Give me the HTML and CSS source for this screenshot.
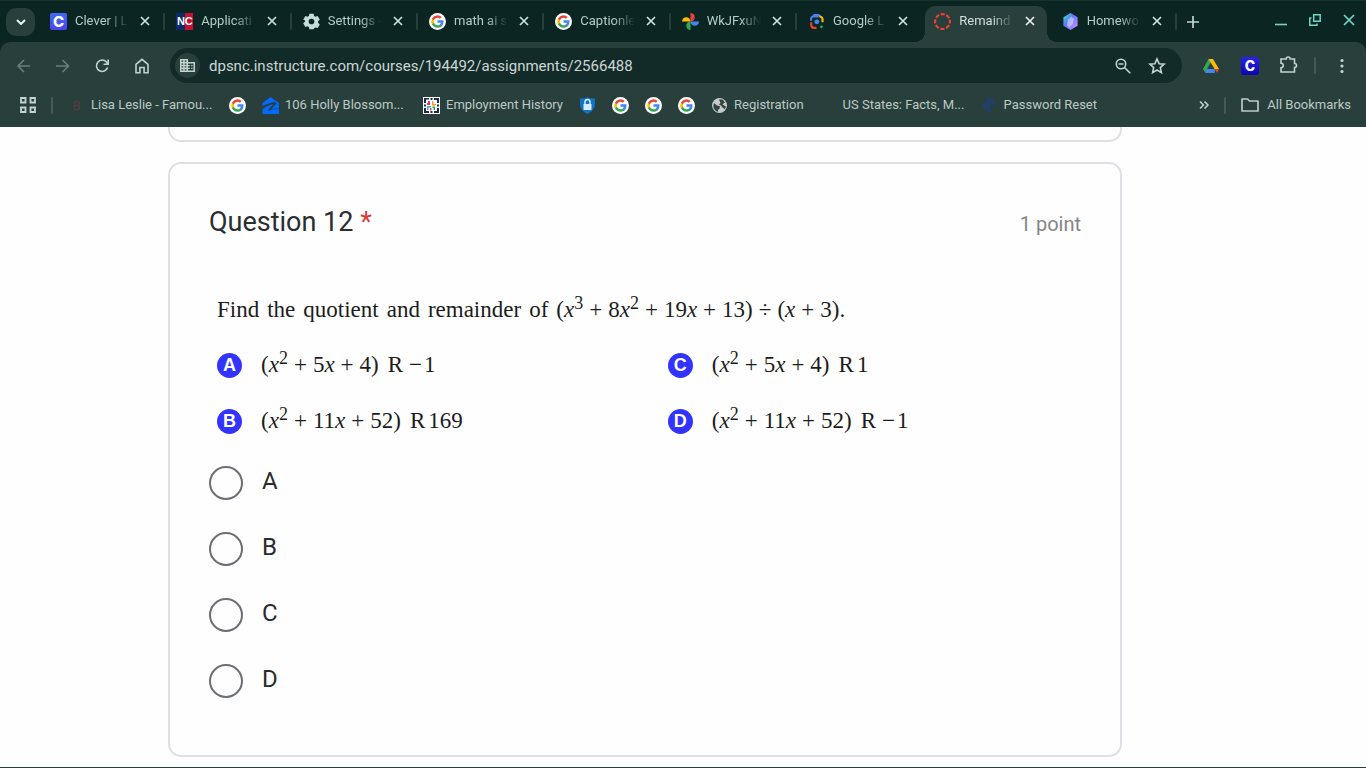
FILE: index.html
```html
<!DOCTYPE html>
<html lang="en">
<head>
<meta charset="utf-8">
<meta name="viewport" content="width=device-width, initial-scale=1">
<title>Remainder</title>
<link rel="stylesheet" href="styles.css">
</head>
<body>
<svg class="defs" aria-hidden="true">
  <symbol id="google" viewBox="0 0 24 24">
    <circle cx="12" cy="12" r="12" fill="#fff"/>
    <g transform="translate(2.400 2.400) scale(.8)">
      <path fill="#4285f4" d="M22.56 12.25c0-.78-.07-1.53-.2-2.25H12v4.26h5.92a5.06 5.06 0 0 1-2.2 3.32v2.77h3.57c2.08-1.92 3.27-4.74 3.27-8.1z"/>
      <path fill="#34a853" d="M12 23c2.97 0 5.46-.98 7.28-2.66l-3.57-2.77c-.98.66-2.23 1.06-3.71 1.06-2.86 0-5.29-1.93-6.16-4.53H2.18v2.84A11 11 0 0 0 12 23z"/>
      <path fill="#fbbc05" d="M5.84 14.09a6.6 6.6 0 0 1 0-4.18V7.07H2.18a11 11 0 0 0 0 9.86z"/>
      <path fill="#ea4335" d="M12 5.38c1.62 0 3.06.56 4.21 1.64l3.15-3.15A11 11 0 0 0 2.18 7.07l3.66 2.84C6.71 7.31 9.14 5.38 12 5.38z"/>
    </g>
  </symbol>
  <symbol id="close" viewBox="0 0 10 10"><path d="M1 1l8 8M9 1L1 9" fill="none" stroke="currentColor" stroke-width="1.7"/></symbol>
</svg>

<header class="browser">
  <div class="tabstrip">
    <button class="tab-search" type="button" aria-label="Search tabs"><svg width="10" height="6" viewBox="0 0 10 6"><path d="M1 1l4 4 4-4" fill="none" stroke="currentColor" stroke-width="2"/></svg></button>
    <nav class="tabs" aria-label="Open tabs">
      <div class="tab"><span class="favicon clever">C</span><span class="tab-title">Clever | L</span><button class="tab-close" type="button" aria-label="Close tab"><svg><use href="#close"/></svg></button></div>
      <div class="tab"><span class="favicon nc">NC</span><span class="tab-title">Applicati</span><button class="tab-close" type="button" aria-label="Close tab"><svg><use href="#close"/></svg></button></div>
      <div class="tab"><svg class="favicon gear" viewBox="0 0 24 24"><path fill="currentColor" fill-rule="evenodd" d="M9 1h6l.7 3.2 1.9 1.1 3.1-1 3 5.2-2.4 2.2v2.2l2.4 2.2-3 5.2-3.1-1-1.9 1.1L15 23H9l-.7-3.2-1.9-1.1-3.1 1-3-5.2 2.4-2.2v-2.2L.3 9.500l3-5.200 3.100 1 1.900-1.100zM12 8a4 4 0 1 0 0 8 4 4 0 0 0 0-8z"/></svg><span class="tab-title">Settings -</span><button class="tab-close" type="button" aria-label="Close tab"><svg><use href="#close"/></svg></button></div>
      <div class="tab"><svg class="favicon"><use href="#google"/></svg><span class="tab-title">math ai s</span><button class="tab-close" type="button" aria-label="Close tab"><svg><use href="#close"/></svg></button></div>
      <div class="tab"><svg class="favicon"><use href="#google"/></svg><span class="tab-title">Captionle</span><button class="tab-close" type="button" aria-label="Close tab"><svg><use href="#close"/></svg></button></div>
      <div class="tab"><svg class="favicon" viewBox="0 0 24 24"><path fill="#ea4335" d="M12 0a6 6 0 0 1 0 12z"/><path fill="#4285f4" d="M24 12a6 6 0 0 1-12 0z"/><path fill="#34a853" d="M12 24a6 6 0 0 1 0-12z"/><path fill="#fbbc04" d="M0 12a6 6 0 0 1 12 0z"/></svg><span class="tab-title">WkJFxuN</span><button class="tab-close" type="button" aria-label="Close tab"><svg><use href="#close"/></svg></button></div>
      <div class="tab"><svg class="favicon" viewBox="0 0 24 24" fill="none" stroke-width="3"><path stroke="#4285f4" d="M4.500 11V8a3 3 0 0 1 3-3H15"/><path stroke="#4285f4" d="M7 4l2-1h6l2 2"/><path stroke="#fbbc04" d="M16 5a4 4 0 0 1 4.500 4v4"/><path stroke="#ea4335" d="M4.500 13v4a4 4 0 0 0 4 4H12"/><circle cx="12.500" cy="12.500" r="3.500" fill="#4285f4"/><circle cx="19" cy="19.500" r="2" fill="#34a853"/></svg><span class="tab-title">Google L</span><button class="tab-close" type="button" aria-label="Close tab"><svg><use href="#close"/></svg></button></div>
      <div class="tab active"><svg class="favicon" viewBox="0 0 24 24"><circle cx="12" cy="12" r="10.500" fill="none" stroke="#ee4035" stroke-width="3" stroke-dasharray="5.900 2.347" stroke-dashoffset="2.950"/></svg><span class="tab-title">Remaind</span><button class="tab-close" type="button" aria-label="Close tab"><svg><use href="#close"/></svg></button></div>
      <div class="tab"><svg class="favicon" viewBox="0 0 24 24"><defs><linearGradient id="gem" x1="0" y1="0" x2="1" y2="1"><stop offset="0" stop-color="#2df0c0"/><stop offset=".4" stop-color="#5b7bff"/><stop offset="1" stop-color="#d98bff"/></linearGradient></defs><path fill="url(#gem)" d="M12 0l10 6v12l-10 6-10-6V6z"/><path fill="#fff" opacity=".45" d="M13 5l4 3-2 8-5 4-3-3 1-7z"/></svg><span class="tab-title">Homewo</span><button class="tab-close" type="button" aria-label="Close tab"><svg><use href="#close"/></svg></button></div>
    </nav>
    <button class="new-tab" type="button" aria-label="New tab"><svg width="12" height="12" viewBox="0 0 12 12"><path d="M6 0v12M0 6h12" stroke="currentColor" stroke-width="1.700"/></svg></button>
    <div class="window-controls">
      <button type="button" aria-label="Minimize"><svg width="12" height="12" viewBox="0 0 12 12"><path d="M0 10.500h12" stroke="currentColor" stroke-width="1.600"/></svg></button>
      <button type="button" aria-label="Restore"><svg width="12" height="12" viewBox="0 0 12 12" fill="none" stroke="currentColor" stroke-width="1.500"><path d="M4.700.8h6.500v6.500H4.700zM2.500 4H.8v7.200H8V9.500"/></svg></button>
      <button type="button" aria-label="Close window"><svg width="12" height="12" viewBox="0 0 12 12"><path d="M1 1l10 10M11 1L1 11" stroke="currentColor" stroke-width="1.700"/></svg></button>
    </div>
  </div>

  <div class="chrome-body">
    <div class="toolbar">
      <button class="tool dim" type="button" aria-label="Back"><svg viewBox="0 0 20 20"><path d="M16 10H4.500M10 4l-6 6 6 6"/></svg></button>
      <button class="tool dim" type="button" aria-label="Forward"><svg viewBox="0 0 20 20"><path d="M3 10h12.500M9.500 4l6 6-6 6"/></svg></button>
      <button class="tool" type="button" aria-label="Reload"><svg viewBox="0 0 20 20"><path d="M15.600 11.500A5.700 5.700 0 1 1 14.500 6l1.500 1.700M16.200 3.500v4.700h-4.700"/></svg></button>
      <button class="tool" type="button" aria-label="Home"><svg viewBox="0 0 20 20"><path d="M5 16.700V8.300l6-5 6 5v8.400h-3.900v-5.200H8.900v5.200z"/></svg></button>
      <div class="omnibox">
        <button class="site-info" type="button" aria-label="View site information"><svg width="15" height="13" viewBox="0 0 15 13"><path fill="currentColor" fill-rule="evenodd" d="M0 0h8v3h7v10H0zM1.500 1.500v1.200h1.700V1.500zm3.200 0v1.200h1.700V1.500zM1.500 4.400v1.300h1.700V4.400zm3.200 0v1.300h1.700V4.400zM1.500 7.300v1.300h1.700V7.300zm3.200 0v1.300h1.700V7.300zM1.500 10.200v1.300h1.700v-1.300zm3.200 0v1.300h1.700v-1.300zM8 4.500V6h1.800v1.300H8v1.400h1.800V10H8v1.500h5.500v-7zm3.200 1.500h1.300v1.300h-1.300zm0 2.700h1.300V10h-1.300z"/></svg></button>
        <input class="url" type="text" aria-label="Address bar" value="dpsnc.instructure.com/courses/194492/assignments/2566488">
        <button class="tool" type="button" aria-label="Zoom"><svg viewBox="0 0 20 20"><circle cx="8" cy="8" r="4.700"/><path d="M11.500 11.500l5.800 5.800M5.600 8h4.800"/></svg></button>
        <button class="tool" type="button" aria-label="Bookmark this page"><svg viewBox="0 0 20 20"><path d="M10 3l2.100 4.700 5 .5-3.800 3.400 1.100 5-4.400-2.600-4.400 2.600 1.100-5-3.800-3.400 5-.5z"/></svg></button>
      </div>
      <button class="tool" type="button" aria-label="Google Drive"><svg class="filled" viewBox="0 0 20 20"><path fill="#34a853" d="M7.500 3h4.200L6.300 12.500l-2.200 4L2 13z"/><path fill="#fbbc04" d="M7.500 3H12l6 10h-4.300z"/><path fill="#4285f4" d="M5.500 13H14l-.2 4H4.100z"/><path fill="#ea4335" d="M13.700 13H18l-2.100 3.800z"/></svg></button>
      <button class="tool clever-ext" type="button" aria-label="Clever">C</button>
      <button class="tool" type="button" aria-label="Extensions"><svg viewBox="0 0 20 20"><path d="M2 4h5.200a2 2 0 0 1 4 0h4.300v4.500a2 2 0 0 1 0 4V17H2v-4.200a2.200 2.200 0 0 0 0-4.500z" transform="translate(0 -1)"/></svg></button>
      <span class="divider"></span>
      <button class="tool" type="button" aria-label="Menu"><svg class="filled" viewBox="0 0 20 20" fill="currentColor"><circle cx="10" cy="4.500" r="1.600"/><circle cx="10" cy="10" r="1.600"/><circle cx="10" cy="15.500" r="1.600"/></svg></button>
    </div>

    <nav class="bookmarks" aria-label="Bookmarks">
      <button class="apps" type="button" aria-label="Apps"><svg width="16" height="16" viewBox="0 0 16 16" fill="none" stroke="currentColor" stroke-width="1.800"><path d="M1 1h4.500v4.500H1zM10.500 1H15v4.500h-4.500zM1 10.500h4.500V15H1zM10.500 10.500H15V15h-4.500z"/></svg></button>
      <span class="divider"></span>
      <a class="bookmark" href="#"><span class="bm-icon letter-b">B</span><span class="bm-label long">Lisa Leslie - Famou...</span></a>
      <a class="bookmark" href="#" aria-label="Google"><svg class="bm-icon"><use href="#google"/></svg></a>
      <a class="bookmark" href="#"><svg class="bm-icon" viewBox="0 0 17 17"><path fill="#006aff" d="M8.500 0L17 6v2.500L14 6 12.800 5C9 5.600 4.500 7 .5 9V6zM.5 17v-4.500C4 9.500 7 8 10.500 7.200l.5.600C9 9.500 7 11.800 5.500 14 9 12.500 13 11.800 17 12v5z"/><path fill="#006aff" d="M13 5.500l4 2.500v3.500c-3-.3-5 0-7.500.6C11.500 9.500 13 8 14.500 6.500z"/></svg><span class="bm-label long">106 Holly Blossom...</span></a>
      <a class="bookmark" href="#"><svg class="bm-icon" viewBox="0 0 17 17"><path fill="#fff" d="M0 0h17v17H0z"/><path fill="#1c2b52" d="M1 1h5v1.500H3V6H1zM11 1h5v5h-2V3h-3zM1 11h2v3h3v2H1zM14 11h2v5h-5v-2h3zM7.500 1h2v2h-2zM1 7.500h2v2H1zM14 7.500h2v2h-2zM7.500 14h2v2h-2z"/><path fill="#e5394b" d="M5 4h2v4H4V6h1z"/><path fill="#f39a2d" d="M9 4h1.500v3H13v1.500H9z"/><path fill="#35a7c8" d="M4 9h4v1.500H5.500V13H4z"/><path fill="#2f9d57" d="M9.500 9.500H12V13h-1.500v-2h-1z"/><path fill="#e5394b" d="M7 11h1.500v2.500H7z"/></svg><span class="bm-label">Employment History</span></a>
      <a class="bookmark" href="#" aria-label="Secure"><svg class="bm-icon" viewBox="0 0 17 17"><path fill="#1173c7" d="M8.500 0l2 1.200 5.500.3v6c0 4-3.500 7.500-7.500 9.500C4.500 15 1 11.500 1 7.500v-6l5.500-.3z"/><path fill="#d6ecff" d="M4.500 7h8v6h-8z"/><path fill="none" stroke="#d6ecff" stroke-width="1.500" d="M6 7V5a2.500 2.500 0 0 1 5 0v2"/></svg></a>
      <a class="bookmark" href="#" aria-label="Google"><svg class="bm-icon"><use href="#google"/></svg></a>
      <a class="bookmark" href="#" aria-label="Google"><svg class="bm-icon"><use href="#google"/></svg></a>
      <a class="bookmark" href="#" aria-label="Google"><svg class="bm-icon"><use href="#google"/></svg></a>
      <a class="bookmark" href="#"><svg class="bm-icon" viewBox="0 0 17 17"><circle cx="8.500" cy="8.500" r="7.500" fill="#c4c9cc"/><path fill="#33443f" d="M3 6l3 2.500 2.500.5.500 2-2 2v1.800C4 14 2 11 2.500 8zM8 2.500h3.500l2.500 3-1 .5-1.500 1.500 2.500 1.500 1 .5-1 2.500-2-1-2-2.500-2-1L9.500 6z"/></svg><span class="bm-label">Registration</span></a>
      <a class="bookmark" href="#"><span class="bm-icon"></span><span class="bm-label long">US States: Facts, M...</span></a>
      <a class="bookmark" href="#"><svg class="bm-icon" viewBox="0 0 17 17"><path fill="#233f63" d="M8.500 0c3 2 6 4.500 8 8l-1.500.8c-2-2-4-2-5-.8s-.7 3 .8 4.500L9 17C6 15 3 12 .5 8.500z"/></svg><span class="bm-label">Password Reset</span></a>
      <button class="overflow" type="button" aria-label="More bookmarks"><svg width="10" height="8" viewBox="0 0 10 8"><path d="M1 .5L4.500 4 1 7.500M5.500.5L9 4 5.500 7.500" fill="none" stroke="currentColor" stroke-width="1.500"/></svg></button>
      <span class="divider"></span>
      <a class="bookmark all" href="#"><svg width="18" height="14" viewBox="0 0 18 14"><path d="M1 1h5.500l2 2H17v10H1z" fill="none" stroke="currentColor" stroke-width="1.700" stroke-linejoin="round"/></svg><span class="bm-label">All Bookmarks</span></a>
    </nav>
  </div>
</header>

<main class="page">
  <div class="card card-previous"></div>
  <form class="card question">
    <div class="question-head">
      <h1 class="question-title">Question 12 <span class="required">*</span></h1>
      <span class="points">1 point</span>
    </div>
    <div class="problem">
      <p class="prompt"><span>Find</span><span>the</span><span>quotient</span><span>and</span><span>remainder</span><span>of</span><span>(<i>x</i><sup>3</sup><b class="op">+</b>8<i>x</i><sup>2</sup><b class="op">+</b>19<i>x</i><b class="op">+</b>13)<b class="op">÷</b>(<i>x</i><b class="op">+</b>3).</span></p>
      <div class="choices">
        <div class="choice"><span class="badge">A</span><span>(<i>x</i><sup>2</sup><b class="op">+</b>5<i>x</i><b class="op">+</b>4)<span class="rem">R</span><b class="neg">−</b>1</span></div>
        <div class="choice"><span class="badge">C</span><span>(<i>x</i><sup>2</sup><b class="op">+</b>5<i>x</i><b class="op">+</b>4)<span class="rem">R</span>1</span></div>
        <div class="choice"><span class="badge">B</span><span>(<i>x</i><sup>2</sup><b class="op">+</b>11<i>x</i><b class="op">+</b>52)<span class="rem">R</span>169</span></div>
        <div class="choice"><span class="badge">D</span><span>(<i>x</i><sup>2</sup><b class="op">+</b>11<i>x</i><b class="op">+</b>52)<span class="rem">R</span><b class="neg">−</b>1</span></div>
      </div>
    </div>
    <div class="answers" role="radiogroup" aria-label="Question 12">
      <label class="answer"><input type="radio" name="q12" value="A"><span>A</span></label>
      <label class="answer"><input type="radio" name="q12" value="B"><span>B</span></label>
      <label class="answer"><input type="radio" name="q12" value="C"><span>C</span></label>
      <label class="answer"><input type="radio" name="q12" value="D"><span>D</span></label>
    </div>
  </form>
</main>
</body>
</html>
```
FILE: styles.css
```css
:root {
  --strip: #0b2622;
  --chrome: #283f3b;
  --field: #122b28;
  --icon: #c3d3cf;
  --label: #bccac6;
  --line: #dfe0e6;
}

* { box-sizing: border-box; }

body {
  margin: 0;
  height: 100vh;
  display: flex;
  flex-direction: column;
  overflow: hidden;
  background: #fefefe;
  font-family: Roboto, "Liberation Sans", sans-serif;
}

button {
  display: flex;
  align-items: center;
  justify-content: center;
  flex: none;
  padding: 0;
  border: 0;
  background: none;
  color: inherit;
  font: inherit;
}

svg { display: block; flex: none; }
.defs { position: absolute; width: 0; height: 0; }

/* Tab strip */
.browser { flex: none; background: var(--strip); color: var(--icon); }

.tabstrip {
  display: flex;
  align-items: center;
  height: 42px;
  border-top: 1px solid #17332e;
}

.tab-search {
  width: 29px;
  height: 28px;
  margin: 0 4px 0 6px;
  border-radius: 10px;
  background: var(--chrome);
  color: #e6f2ef;
}

.tabs { display: flex; flex: 0 1 1138px; min-width: 0; align-self: stretch; }

.tab {
  position: relative;
  display: flex;
  flex: 1 1 0;
  min-width: 0;
  align-items: center;
  margin-top: 5px;
  padding: 0 15px 6px 11px;
}

.tab::after {
  content: "";
  position: absolute;
  right: 0;
  top: 7px;
  width: 2px;
  height: 17px;
  border-radius: 1px;
  background: var(--chrome);
}

.tab:has(+ .active)::after { display: none; }

.favicon { width: 17px; height: 17px; flex: none; }
.gear { color: #c5ddd8; }

.clever, .nc {
  display: flex;
  align-items: center;
  justify-content: center;
  border-radius: 2px;
  color: #fff;
  font: 800 15px/17px Inter, sans-serif;
  background: linear-gradient(#3b6cf5, #4a45f0);
}

.nc {
  border-radius: 0;
  font: 700 11px/17px "Liberation Sans", sans-serif;
  background: linear-gradient(90deg, #0b2c66 50%, #c8102e 50%);
}

.tab-title {
  flex: 1;
  min-width: 0;
  margin-left: 8px;
  overflow: hidden;
  white-space: nowrap;
  font-size: 13px;
  line-height: 18px;
  color: #b3ccc6;
  mask-image: linear-gradient(90deg, #000 60%, transparent);
}

.tab-close { width: 10px; height: 10px; margin-left: 11px; color: #c9e4de; }
.tab-close svg { width: 10px; height: 10px; }

.active {
  margin-right: 4px;
  margin-left: 2px;
  padding-left: 9px;
  padding-right: 12px;
  border-radius: 10px 10px 0 0;
  background: var(--chrome);
}

.active .tab-title { color: #d3dfdc; }
.active .tab-close { color: #e8f0ee; }

.active::before, .active::after {
  content: "";
  position: absolute;
  top: auto;
  bottom: 0;
  width: 10px;
  height: 10px;
  border-radius: 0;
}

.active::before { left: -10px; background: radial-gradient(circle at 0 0, transparent 10px, var(--chrome) 10px); }
.active::after { right: -10px; background: radial-gradient(circle at 100% 0, transparent 10px, var(--chrome) 10px); }

.new-tab { width: 12px; height: 12px; margin-left: 10px; }

.window-controls { display: flex; gap: 22px; margin: 0 11px 4px auto; color: #6fd6c4; }

/* Toolbar */
.chrome-body { border-radius: 10px 10px 0 0; background: var(--chrome); }

.toolbar { display: flex; align-items: center; gap: 19px; padding: 6px 14px 0; }

.tool { width: 20px; height: 20px; }
.tool svg { width: 20px; height: 20px; fill: none; stroke: currentColor; stroke-width: 1.6; }
.tool svg.filled { fill: currentColor; stroke: none; }
.dim { color: #6b7e7a; }

.omnibox {
  display: flex;
  align-items: center;
  flex: 1;
  min-width: 0;
  height: 35px;
  gap: 14px;
  padding: 0 15px 0 5px;
  border-radius: 18px;
  background: var(--field);
}

.site-info { width: 25px; height: 25px; border-radius: 50%; background: var(--chrome); }

.url {
  flex: 1;
  min-width: 0;
  margin-left: -5px;
  padding: 0;
  border: 0;
  outline: 0;
  background: none;
  color: #cdd6d4;
  font: 15px/20px Roboto, sans-serif;
}

.clever-ext {
  width: 18px;
  height: 18px;
  margin: 0 1px;
  border-radius: 3px;
  background: linear-gradient(#2a22f0, #0b04b0);
  color: #fff;
  font: 800 14px/18px Inter, sans-serif;
}

.divider { flex: none; width: 2px; height: 17px; margin: 0 -3px 0 -4px; border-radius: 1px; background: #435a55; }

/* Bookmarks bar */
.bookmarks { display: flex; align-items: center; gap: 16px; height: 44px; padding: 0 15px 0 20px; }
.bookmarks .divider { margin: 0 -1px; }
.bookmark { display: flex; align-items: center; flex: none; gap: 6px; color: var(--label); text-decoration: none; }
.bm-icon { width: 17px; height: 17px; flex: none; }
.bm-label { font-size: 13px; line-height: 18px; white-space: nowrap; }
.long { width: 122px; }
.letter-b { color: #5b3b40; font-size: 13px; line-height: 17px; text-align: center; }
.overflow { margin-left: auto; }
.all { gap: 8px; }

/* Form page */
.page {
  display: flex;
  flex-direction: column;
  flex: 1;
  min-height: 0;
  gap: 20px;
  padding: 0 244px 10px 168px;
  border-bottom: 1px solid var(--chrome);
  overflow: hidden;
}

.card { flex: none; border: 2px solid var(--line); border-radius: 13px; }
.card-previous { height: 15px; border-top: 0; border-radius: 0 0 13px 13px; }
.question { padding: 40px 39px 41px; }

.question-head { display: flex; justify-content: space-between; align-items: baseline; }
.question-title { margin: 0; font-size: 27px; font-weight: 400; line-height: 36px; color: #2b2d31; }
.required { color: #db3a34; }
.points { font-size: 20px; line-height: 24px; color: #858585; }

.problem {
  padding: 54px 0 0 8px;
  color: #1c1c1c;
  font-family: "Liberation Serif", serif;
  font-size: 23px;
}

.prompt { display: flex; flex-wrap: wrap; gap: 8px; margin: 0; line-height: 32px; }
.problem sup { font-size: 18px; line-height: 0; vertical-align: 8px; }
.op, .neg { font-weight: 400; }
.op { margin: 0 6px; }
.neg { margin: 0 2px 0 3px; }
.rem { margin: 0 3px 0 9px; }

.choices { display: grid; grid-template-columns: 12fr 11fr; margin-top: 11px; line-height: 56px; }
.choice { display: flex; align-items: center; gap: 19px; white-space: nowrap; }

.badge {
  width: 25px;
  height: 25px;
  border-radius: 50%;
  background: #3333ff;
  color: #fff;
  font: 700 18px/25px "Liberation Sans", sans-serif;
  text-align: center;
}

.answers { padding-top: 1px; }
.answer { display: flex; align-items: center; gap: 19px; height: 66px; color: #2b2b2b; font-size: 24px; line-height: 28px; }
.answer span { padding-bottom: 5px; }

.answer input {
  appearance: none;
  width: 34px;
  height: 34px;
  margin: 0;
  border: 2px solid #6b6e73;
  border-radius: 50%;
}

.answer input:checked { box-shadow: inset 0 0 0 6px #fff; background: #673ab7; }
```
